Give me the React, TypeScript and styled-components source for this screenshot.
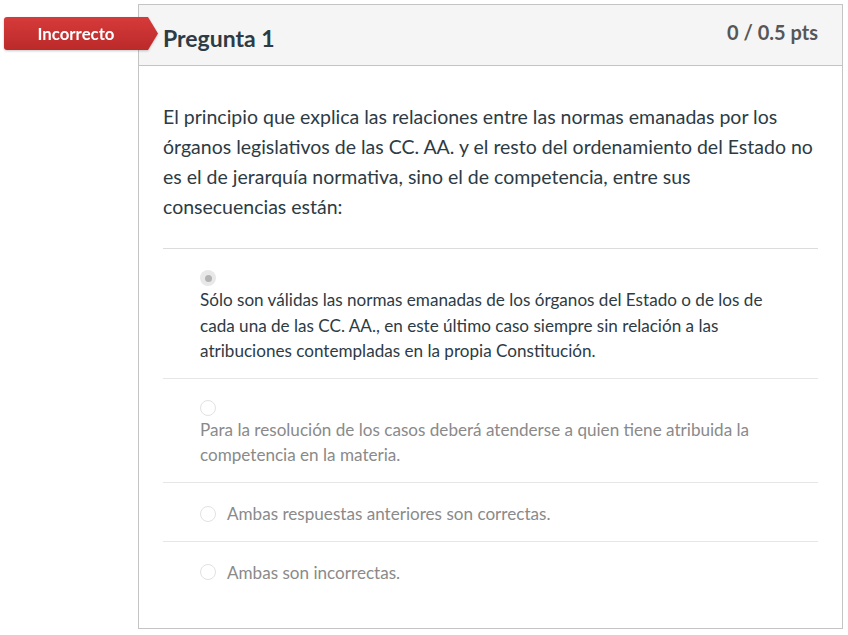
import React from 'react';
import styled, { createGlobalStyle } from 'styled-components';

const GlobalStyle = createGlobalStyle`
  html, body {
    margin: 0;
    padding: 0;
    background: #ffffff;
  }
  body {
    font-family: Lato, 'Noto Sans', 'Liberation Sans', sans-serif;
    color: #2d3b45;
  }
`;

const Page = styled.div`
  padding: 4px 5px 0 138px;
`;

const Card = styled.section`
  position: relative;
  width: 705px;
  box-sizing: border-box;
  border: 1px solid #c4c4c4;
  background: #fff;
`;

const BadgeWrap = styled.div`
  position: absolute;
  left: -135px;
  top: 12px;
  width: 154px;
  height: 33px;
  filter: drop-shadow(0 1px 1px rgba(0, 0, 0, 0.22));
`;

const Badge = styled.div`
  width: 154px;
  height: 33px;
  box-sizing: border-box;
  padding-right: 10px;
  display: flex;
  align-items: center;
  justify-content: center;
  background: linear-gradient(#d73a3a, #bb2a2a);
  clip-path: polygon(0 0, 144px 0, 154px 50%, 144px 100%, 0 100%);
  border-radius: 3px 0 0 3px;
  color: #fff;
  font-weight: 700;
  font-size: 16.8px;
`;

const Header = styled.header`
  height: 61px;
  box-sizing: border-box;
  padding: 0 24px;
  display: flex;
  align-items: center;
  justify-content: space-between;
  background: #f5f5f5;
  border-bottom: 1px solid #c4c4c4;
`;

const Title = styled.h2`
  margin: 6px 0 0;
  font-size: 23px;
  font-weight: 700;
  color: #2d3b45;
`;

const Points = styled.div`
  align-self: flex-start;
  margin-top: 15px;
  font-size: 20px;
  font-weight: 700;
  color: #575757;
`;

const Body = styled.div`
  padding: 36px 24px 43px;
`;

const Question = styled.p`
  margin: 0;
  padding-bottom: 26px;
  border-bottom: 1px solid #dcdcdc;
  font-size: 19.5px;
  line-height: 30px;
  color: #2d3b45;
`;

const Answer = styled.div<{ $last?: boolean }>`
  padding: 18px 0 ${({ $last }) => ($last ? '0' : '14px')} 37px;
  border-bottom: ${({ $last }) => ($last ? 'none' : '1px solid #e6e6e6')};
  display: flex;
  flex-wrap: wrap;
  align-items: center;
  column-gap: 11px;
`;

const Radio = styled.span<{ $checked?: boolean; $stacked?: boolean }>`
  flex: none;
  width: 16px;
  height: 16px;
  box-sizing: border-box;
  border-radius: 50%;
  margin: ${({ $stacked }) => ($stacked ? '3px 0 1px' : '0')};
  display: flex;
  align-items: center;
  justify-content: center;
  border: ${({ $checked }) => ($checked ? 'none' : '1.5px solid #e2e2e2')};
  background: ${({ $checked }) => ($checked ? '#e8e8e8' : '#fff')};

  &::after {
    content: '';
    display: ${({ $checked }) => ($checked ? 'block' : 'none')};
    width: 7px;
    height: 7px;
    border-radius: 50%;
    background: #b3b3b3;
  }
`;

const AnswerText = styled.div<{ $selected?: boolean; $stacked?: boolean }>`
  flex: ${({ $stacked }) => ($stacked ? '0 0 100%' : '0 1 auto')};
  font-size: 17.1px;
  line-height: 25.6px;
  color: ${({ $selected }) => ($selected ? '#2d3b45' : '#8a8a8a')};
  padding-right: 38px;
  box-sizing: border-box;
`;

const answers = [
  {
    text: 'Sólo son válidas las normas emanadas de los órganos del Estado o de los de cada una de las CC. AA., en este último caso siempre sin relación a las atribuciones contempladas en la propia Constitución.',
    selected: true,
    stacked: true,
  },
  {
    text: 'Para la resolución de los casos deberá atenderse a quien tiene atribuida la competencia en la materia.',
    selected: false,
    stacked: true,
  },
  { text: 'Ambas respuestas anteriores son correctas.', selected: false, stacked: false },
  { text: 'Ambas son incorrectas.', selected: false, stacked: false },
];

const App: React.FC = () => {
  return (
    <>
      <GlobalStyle />
      <Page>
        <Card>
          <BadgeWrap>
            <Badge>Incorrecto</Badge>
          </BadgeWrap>
          <Header>
            <Title>Pregunta 1</Title>
            <Points>0 / 0.5 pts</Points>
          </Header>
          <Body>
            <Question>
              El principio que explica las relaciones entre las normas emanadas por los órganos
              legislativos de las CC. AA. y el resto del ordenamiento del Estado no es el de
              jerarquía normativa, sino el de competencia, entre sus consecuencias están:
            </Question>
            {answers.map((a, i) => (
              <Answer key={i} $last={i === answers.length - 1}>
                <Radio $checked={a.selected} $stacked={a.stacked} />
                <AnswerText $selected={a.selected} $stacked={a.stacked}>
                  {a.text}
                </AnswerText>
              </Answer>
            ))}
          </Body>
        </Card>
      </Page>
    </>
  );
};

export default App;
